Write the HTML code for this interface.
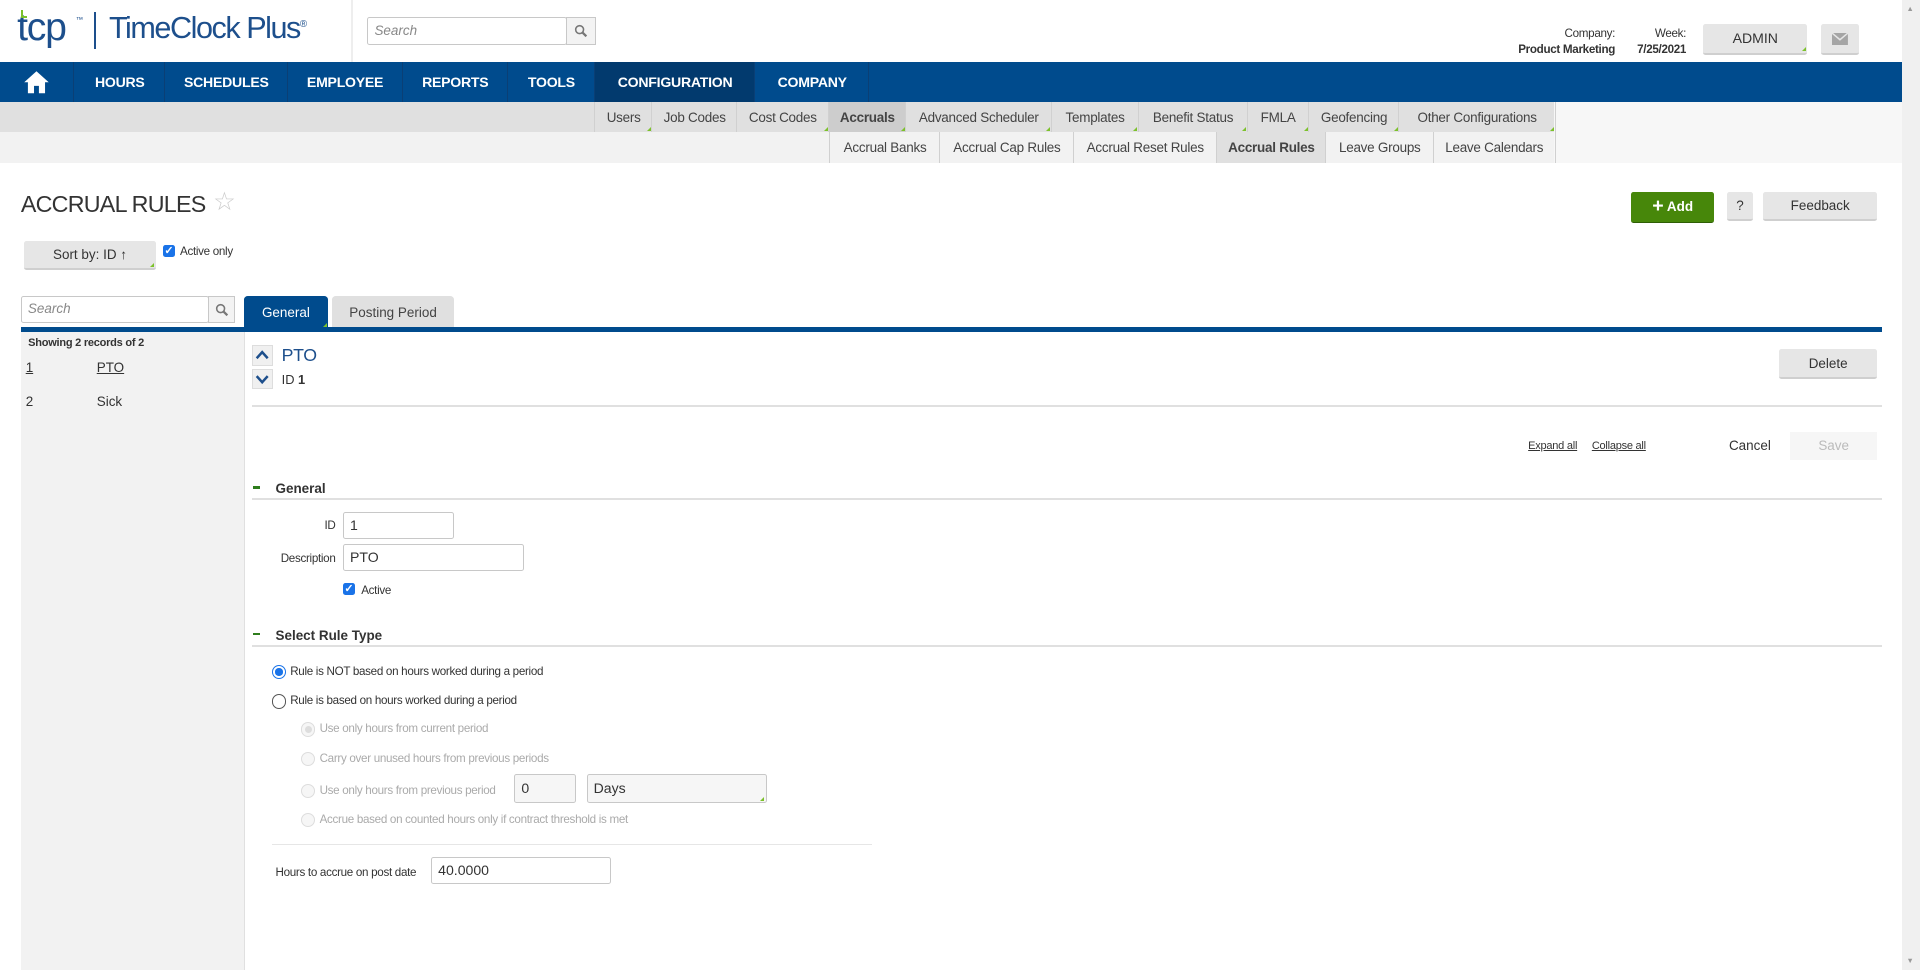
<!DOCTYPE html>
<html><head><meta charset="utf-8"><style>
html,body{margin:0;padding:0;overflow:hidden;background:#fff}
#w{zoom:1.22449;width:1568px;height:792px;position:relative;font-family:"Liberation Sans",sans-serif;color:#333;font-size:11px;overflow:hidden}
.a{position:absolute}
.nav{left:0;top:51px;width:1553px;height:32px;background:#004b8d}
.nav div{position:absolute;top:0;height:32px;line-height:33px;color:#fff;font-weight:bold;font-size:11.5px;letter-spacing:-.2px;text-align:center;border-left:1px solid #0a3f75}
.sub{position:absolute;height:25px;line-height:26px;font-size:11px;letter-spacing:-.2px;text-align:center;border-left:1px solid #d0d0d0;color:#444}
.tri::after{content:"";position:absolute;right:1px;bottom:1px;border-left:4px solid transparent;border-bottom:4px solid #7cc12b}
.btn{position:absolute;background:#e6e6e6;border-bottom:2px solid #cfcfcf;border-radius:2px;text-align:center;color:#333;font-size:11px}
.inp{position:absolute;border:1px solid #c8c8c8;border-radius:2px;background:#fff;font-size:11.5px;padding-left:5px;box-sizing:border-box}
.rad{position:absolute;width:10px;height:10px;border:1px solid #555;border-radius:50%;background:#fff}
.dis{border-color:#ddd;background:#f6f6f6}
.gl{color:#aaa}
.cb{position:absolute;width:10px;height:10px;background:#1a73e8;border-radius:2px;color:#fff;font-size:9px;line-height:10px;text-align:center;font-weight:bold}
.fs{font-size:9.5px;letter-spacing:-.25px}
</style></head><body><div id="w">
<svg width="0" height="0" style="position:absolute"><defs><symbol id="mg" viewBox="0 0 12 12"><circle cx="5" cy="5" r="3.5" stroke="#777" stroke-width="1.4" fill="none"/><path d="M7.5 7.5 L11 11" stroke="#777" stroke-width="2"/></symbol></defs></svg>
<!-- header -->
<div class="a" style="left:14px;top:5px;font-size:32px;color:#1d4f8c;letter-spacing:-1px">tcp</div>
<div class="a" style="left:17px;top:8px;width:2px;height:6px;background:#7cc12b"></div>
<div class="a" style="left:17px;top:13px;width:5px;height:2px;background:#7cc12b"></div>
<div class="a" style="left:62px;top:12px;font-size:6px;color:#1d4f8c">™</div>
<div class="a" style="left:77px;top:10px;width:1px;height:30px;background:#1d4f8c"></div>
<div class="a" style="left:89px;top:9px;font-size:25px;color:#1d4f8c;letter-spacing:-1.2px">TimeClock Plus<sup style="font-size:8px">®</sup></div>
<div class="a" style="left:287px;top:0;width:1px;height:51px;background:#eee"></div>
<div class="inp" style="left:300px;top:14px;width:163px;height:23px;line-height:21px;font-style:italic;color:#888;font-size:11px">Search</div>
<div class="a" style="left:462px;top:14px;width:25px;height:23px;border:1px solid #c8c8c8;box-sizing:border-box;background:#f3f3f3"><svg width="11" height="11" style="position:absolute;left:6px;top:5px"><use href="#mg"/></svg></div>
<div class="a fs" style="left:1230px;top:22px;width:89px;text-align:right">Company:</div>
<div class="a fs" style="left:1200px;top:35px;width:119px;text-align:right;font-weight:bold">Product Marketing</div>
<div class="a fs" style="left:1320px;top:22px;width:57px;text-align:right">Week:</div>
<div class="a fs" style="left:1320px;top:35px;width:57px;text-align:right;font-weight:bold">7/25/2021</div>
<div class="btn tri" style="left:1391px;top:20px;width:85px;height:23px;line-height:24px;font-size:11.5px">ADMIN</div>
<div class="btn" style="left:1487px;top:20px;width:31px;height:23px"><svg width="13" height="10" style="position:absolute;left:9px;top:7px"><rect x="0" y="0" width="13" height="10" fill="#a5a5a5"/><path d="M0 0 L6.5 5.5 L13 0" stroke="#e6e6e6" stroke-width="1.2" fill="none"/></svg></div>
<div class="a" style="left:1553px;top:0;width:15px;height:792px;background:#f0f0f0"></div>
<div class="a" style="left:1557px;top:3px;font-size:6px;color:#999">▲</div>
<div class="a" style="left:1557px;top:781px;font-size:6px;color:#999">▼</div>
<!-- nav -->
<div class="a nav">
<div style="left:0;width:60px;border:0"><svg width="22" height="20" viewBox="0 0 22 20" style="margin-top:6px"><path d="M11 1 L1 10 L4 10 L4 19 L9 19 L9 13 L13 13 L13 19 L18 19 L18 10 L21 10 Z" fill="#fff"/></svg></div>
<div style="left:60px;width:74px">HOURS</div>
<div style="left:134px;width:100px">SCHEDULES</div>
<div style="left:234px;width:94px">EMPLOYEE</div>
<div style="left:328px;width:86px">REPORTS</div>
<div style="left:414px;width:71px">TOOLS</div>
<div style="left:485px;width:131px;background:#023a6e">CONFIGURATION</div>
<div style="left:616px;width:93px">COMPANY</div>
<div style="left:709px;width:1px"></div>
</div>
<div class="a" style="left:0;top:83px;width:1269px;height:25px;background:#e0e0e0"></div>
<div class="a" style="left:0;top:108px;width:1269px;height:25px;background:#f2f2f2"></div>
<div class="a" style="left:1269px;top:83px;width:284px;height:50px;background:#f7f7f7"></div>
<div class="sub tri" style="left:485px;top:83px;width:47px">Users</div>
<div class="sub" style="left:532px;top:83px;width:69px">Job Codes</div>
<div class="sub tri" style="left:601px;top:83px;width:75px">Cost Codes</div>
<div class="sub tri" style="left:676px;top:83px;width:63px;background:#cdcdcd;font-weight:bold">Accruals</div>
<div class="sub tri" style="left:739px;top:83px;width:119px">Advanced Scheduler</div>
<div class="sub tri" style="left:858px;top:83px;width:71px">Templates</div>
<div class="sub tri" style="left:929px;top:83px;width:89px">Benefit Status</div>
<div class="sub tri" style="left:1018px;top:83px;width:50px">FMLA</div>
<div class="sub tri" style="left:1068px;top:83px;width:74px">Geofencing</div>
<div class="sub tri" style="left:1142px;top:83px;width:127px;border-right:1px solid #d0d0d0">Other Configurations</div>
<div class="sub" style="left:677px;top:108px;width:90px">Accrual Banks</div>
<div class="sub" style="left:767px;top:108px;width:109px">Accrual Cap Rules</div>
<div class="sub" style="left:876px;top:108px;width:117px">Accrual Reset Rules</div>
<div class="sub" style="left:993px;top:108px;width:89px;background:#e0e0e0;font-weight:bold">Accrual Rules</div>
<div class="sub" style="left:1082px;top:108px;width:88px">Leave Groups</div>
<div class="sub" style="left:1170px;top:108px;width:99px;border-right:1px solid #d0d0d0">Leave Calendars</div>
<!-- title -->
<div class="a" style="left:17px;top:156px;font-size:19px;color:#333;letter-spacing:-.6px">ACCRUAL RULES</div>
<div class="a" style="left:174px;top:153px;font-size:21px;color:#ccc">☆</div>
<div class="a" style="left:1332px;top:157px;width:68px;height:24px;background:#47870a;border-radius:2px;border-bottom:1px solid #2e5e05;color:#fff;font-weight:bold;font-size:11px;line-height:24px;text-align:center"><b style="font-size:16px;vertical-align:-1px">+</b> Add</div>
<div class="btn" style="left:1410px;top:157px;width:22px;height:22px;line-height:23px">?</div>
<div class="btn" style="left:1440px;top:157px;width:93px;height:22px;line-height:23px">Feedback</div>
<div class="btn tri" style="left:20px;top:197px;width:107px;height:22px;line-height:23px">Sort by: ID ↑</div>
<div class="cb" style="left:133px;top:200px">✓</div>
<div class="a fs" style="left:147px;top:200px">Active only</div>
<div class="inp" style="left:17px;top:242px;width:154px;height:22px;line-height:20px;font-style:italic;color:#888;font-size:11px">Search</div>
<div class="a" style="left:170px;top:242px;width:22px;height:22px;border:1px solid #c8c8c8;box-sizing:border-box;background:#f3f3f3"><svg width="11" height="11" style="position:absolute;left:5px;top:5px"><use href="#mg"/></svg></div>
<div class="a tri" style="left:199px;top:242px;width:69px;height:26px;background:#004b8d;color:#fff;text-align:center;line-height:27px;font-size:11px;border-radius:3px 3px 0 0">General</div>
<div class="a" style="left:271px;top:242px;width:100px;height:26px;background:#e0e0e0;color:#444;text-align:center;line-height:27px;font-size:11px;border-radius:3px 3px 0 0">Posting Period</div>
<div class="a" style="left:17px;top:267px;width:1520px;height:4px;background:#004b8d"></div>
<div class="a" style="left:17px;top:271px;width:182px;height:521px;background:#f2f2f2;border-right:1px solid #e0e0e0"></div>
<div class="a" style="left:23px;top:275px;font-size:9px;font-weight:bold;letter-spacing:-.2px">Showing 2 records of 2</div>
<div class="a" style="left:21px;top:294px;font-size:11px;text-decoration:underline">1</div>
<div class="a" style="left:79px;top:294px;font-size:11px;text-decoration:underline">PTO</div>
<div class="a" style="left:21px;top:322px;font-size:11px">2</div>
<div class="a" style="left:79px;top:322px;font-size:11px">Sick</div>
<!-- record -->
<div class="a" style="left:206px;top:282px;width:17px;height:17px;background:#f0f0f0;border:1px solid #ddd;box-sizing:border-box"><svg width="15" height="15"><path d="M3 10 L7.5 5 L12 10" stroke="#1d4f8c" stroke-width="2" fill="none"/></svg></div>
<div class="a" style="left:206px;top:301px;width:17px;height:17px;background:#f0f0f0;border:1px solid #ddd;box-sizing:border-box"><svg width="15" height="15"><path d="M3 5 L7.5 10 L12 5" stroke="#1d4f8c" stroke-width="2" fill="none"/></svg></div>
<div class="a" style="left:230px;top:282px;font-size:14.5px;color:#1d4f8c;letter-spacing:-.3px">PTO</div>
<div class="a" style="left:230px;top:304px;font-size:10.5px">ID <b>1</b></div>
<div class="btn" style="left:1453px;top:285px;width:80px;height:23px;line-height:24px">Delete</div>
<div class="a" style="left:206px;top:331px;width:1331px;height:1px;background:#e0e0e0"></div>
<div class="a" style="left:1248px;top:359px;font-size:9px;text-decoration:underline;letter-spacing:-.2px">Expand all</div>
<div class="a" style="left:1300px;top:359px;font-size:9px;text-decoration:underline;letter-spacing:-.2px">Collapse all</div>
<div class="a" style="left:1412px;top:358px;font-size:11px">Cancel</div>
<div class="a" style="left:1462px;top:353px;width:71px;height:23px;background:#f6f6f6;color:#bbb;text-align:center;line-height:23px;font-size:11px">Save</div>
<!-- General -->
<div class="a" style="left:207px;top:397px;width:5px;height:2px;background:#2e7d1c"></div>
<div class="a" style="left:225px;top:393px;font-size:11px;font-weight:bold">General</div>
<div class="a" style="left:206px;top:407px;width:1331px;height:1px;background:#e0e0e0"></div>
<div class="a fs" style="left:240px;top:424px;width:34px;text-align:right">ID</div>
<div class="inp" style="left:280px;top:418px;width:91px;height:22px;line-height:20px">1</div>
<div class="a fs" style="left:200px;top:451px;width:74px;text-align:right">Description</div>
<div class="inp" style="left:280px;top:444px;width:148px;height:22px;line-height:20px">PTO</div>
<div class="cb" style="left:280px;top:476px">✓</div>
<div class="a fs" style="left:295px;top:477px">Active</div>
<div class="a" style="left:207px;top:517px;width:5px;height:2px;background:#2e7d1c"></div>
<div class="a" style="left:225px;top:513px;font-size:11px;font-weight:bold">Select Rule Type</div>
<div class="a" style="left:206px;top:527px;width:1331px;height:1px;background:#e0e0e0"></div>
<div class="rad" style="left:222px;top:543px;border-color:#1a73e8"><div style="position:absolute;left:2px;top:2px;width:6px;height:6px;border-radius:50%;background:#1a73e8"></div></div>
<div class="a fs" style="left:237px;top:543px">Rule is NOT based on hours worked during a period</div>
<div class="rad" style="left:222px;top:567px"></div>
<div class="a fs" style="left:237px;top:567px">Rule is based on hours worked during a period</div>
<div class="rad dis" style="left:246px;top:590px"><div style="position:absolute;left:2px;top:2px;width:6px;height:6px;border-radius:50%;background:#ddd"></div></div>
<div class="a gl fs" style="left:261px;top:590px">Use only hours from current period</div>
<div class="rad dis" style="left:246px;top:614px"></div>
<div class="a gl fs" style="left:261px;top:614px">Carry over unused hours from previous periods</div>
<div class="rad dis" style="left:246px;top:640px"></div>
<div class="a gl fs" style="left:261px;top:640px">Use only hours from previous period</div>
<div class="inp" style="left:420px;top:632px;width:50px;height:24px;line-height:22px;background:#f6f6f6">0</div>
<div class="inp tri" style="left:479px;top:632px;width:147px;height:24px;line-height:22px;background:#f6f6f6">Days</div>
<div class="rad dis" style="left:246px;top:664px"></div>
<div class="a gl fs" style="left:261px;top:664px">Accrue based on counted hours only if contract threshold is met</div>
<div class="a" style="left:222px;top:689px;width:490px;height:1px;background:#e6e6e6"></div>
<div class="a fs" style="left:225px;top:707px">Hours to accrue on post date</div>
<div class="inp" style="left:352px;top:700px;width:147px;height:22px;line-height:20px">40.0000</div>
</div></body></html>
